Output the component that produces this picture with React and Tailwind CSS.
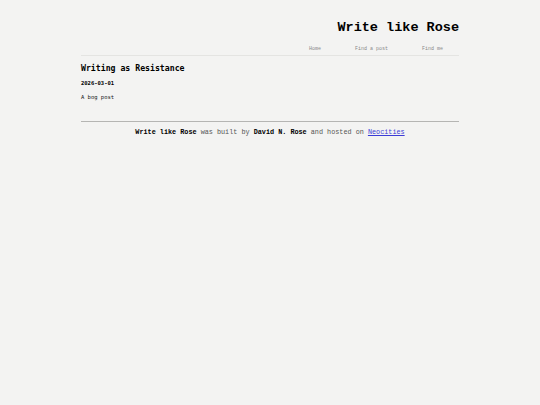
import React from "react";

export default function App() {
  return (
    <div className="min-h-screen bg-[#f3f3f2] text-black">
      <div className="w-[378px] mx-auto">
        <header className="pt-[19px]">
          <h1 className="text-right font-bold text-[13.5px] leading-[18px] font-['Liberation_Mono',monospace]">
            Write like Rose
          </h1>
          <nav className="mt-[9px] flex justify-end border-b border-[#e4e4e2] pb-[3px] font-['Liberation_Mono',monospace] text-[5px] leading-[6px] text-[#8a8a8a]">
            <a className="px-[17px]">Home</a>
            <a className="px-[17px]">Find a post</a>
            <a className="pl-[17px] pr-[16px]">Find me</a>
          </nav>
        </header>

        <main className="pt-[6px] font-['DejaVu_Sans_Mono',monospace]">
          <h2 className="font-bold text-[8.2px] leading-[12px]">Writing as Resistance</h2>
          <p className="mt-[5px] font-bold text-[5.5px] leading-[8px]">2026-03-01</p>
          <p className="mt-[6px] text-[5.5px] leading-[8px] text-[#222]">A bog post</p>
        </main>

        <footer className="mt-[20px] border-t border-[#b5b5b3] pt-[6px] text-center font-['Liberation_Mono',monospace] text-[6.8px] leading-[9px] text-[#555]">
          <b className="text-black">Write like Rose</b> was built by{" "}
          <b className="text-black">David N. Rose</b> and hosted on{" "}
          <a className="text-[#3b3bd6] underline">Neocities</a>
        </footer>
      </div>
    </div>
  );
}
